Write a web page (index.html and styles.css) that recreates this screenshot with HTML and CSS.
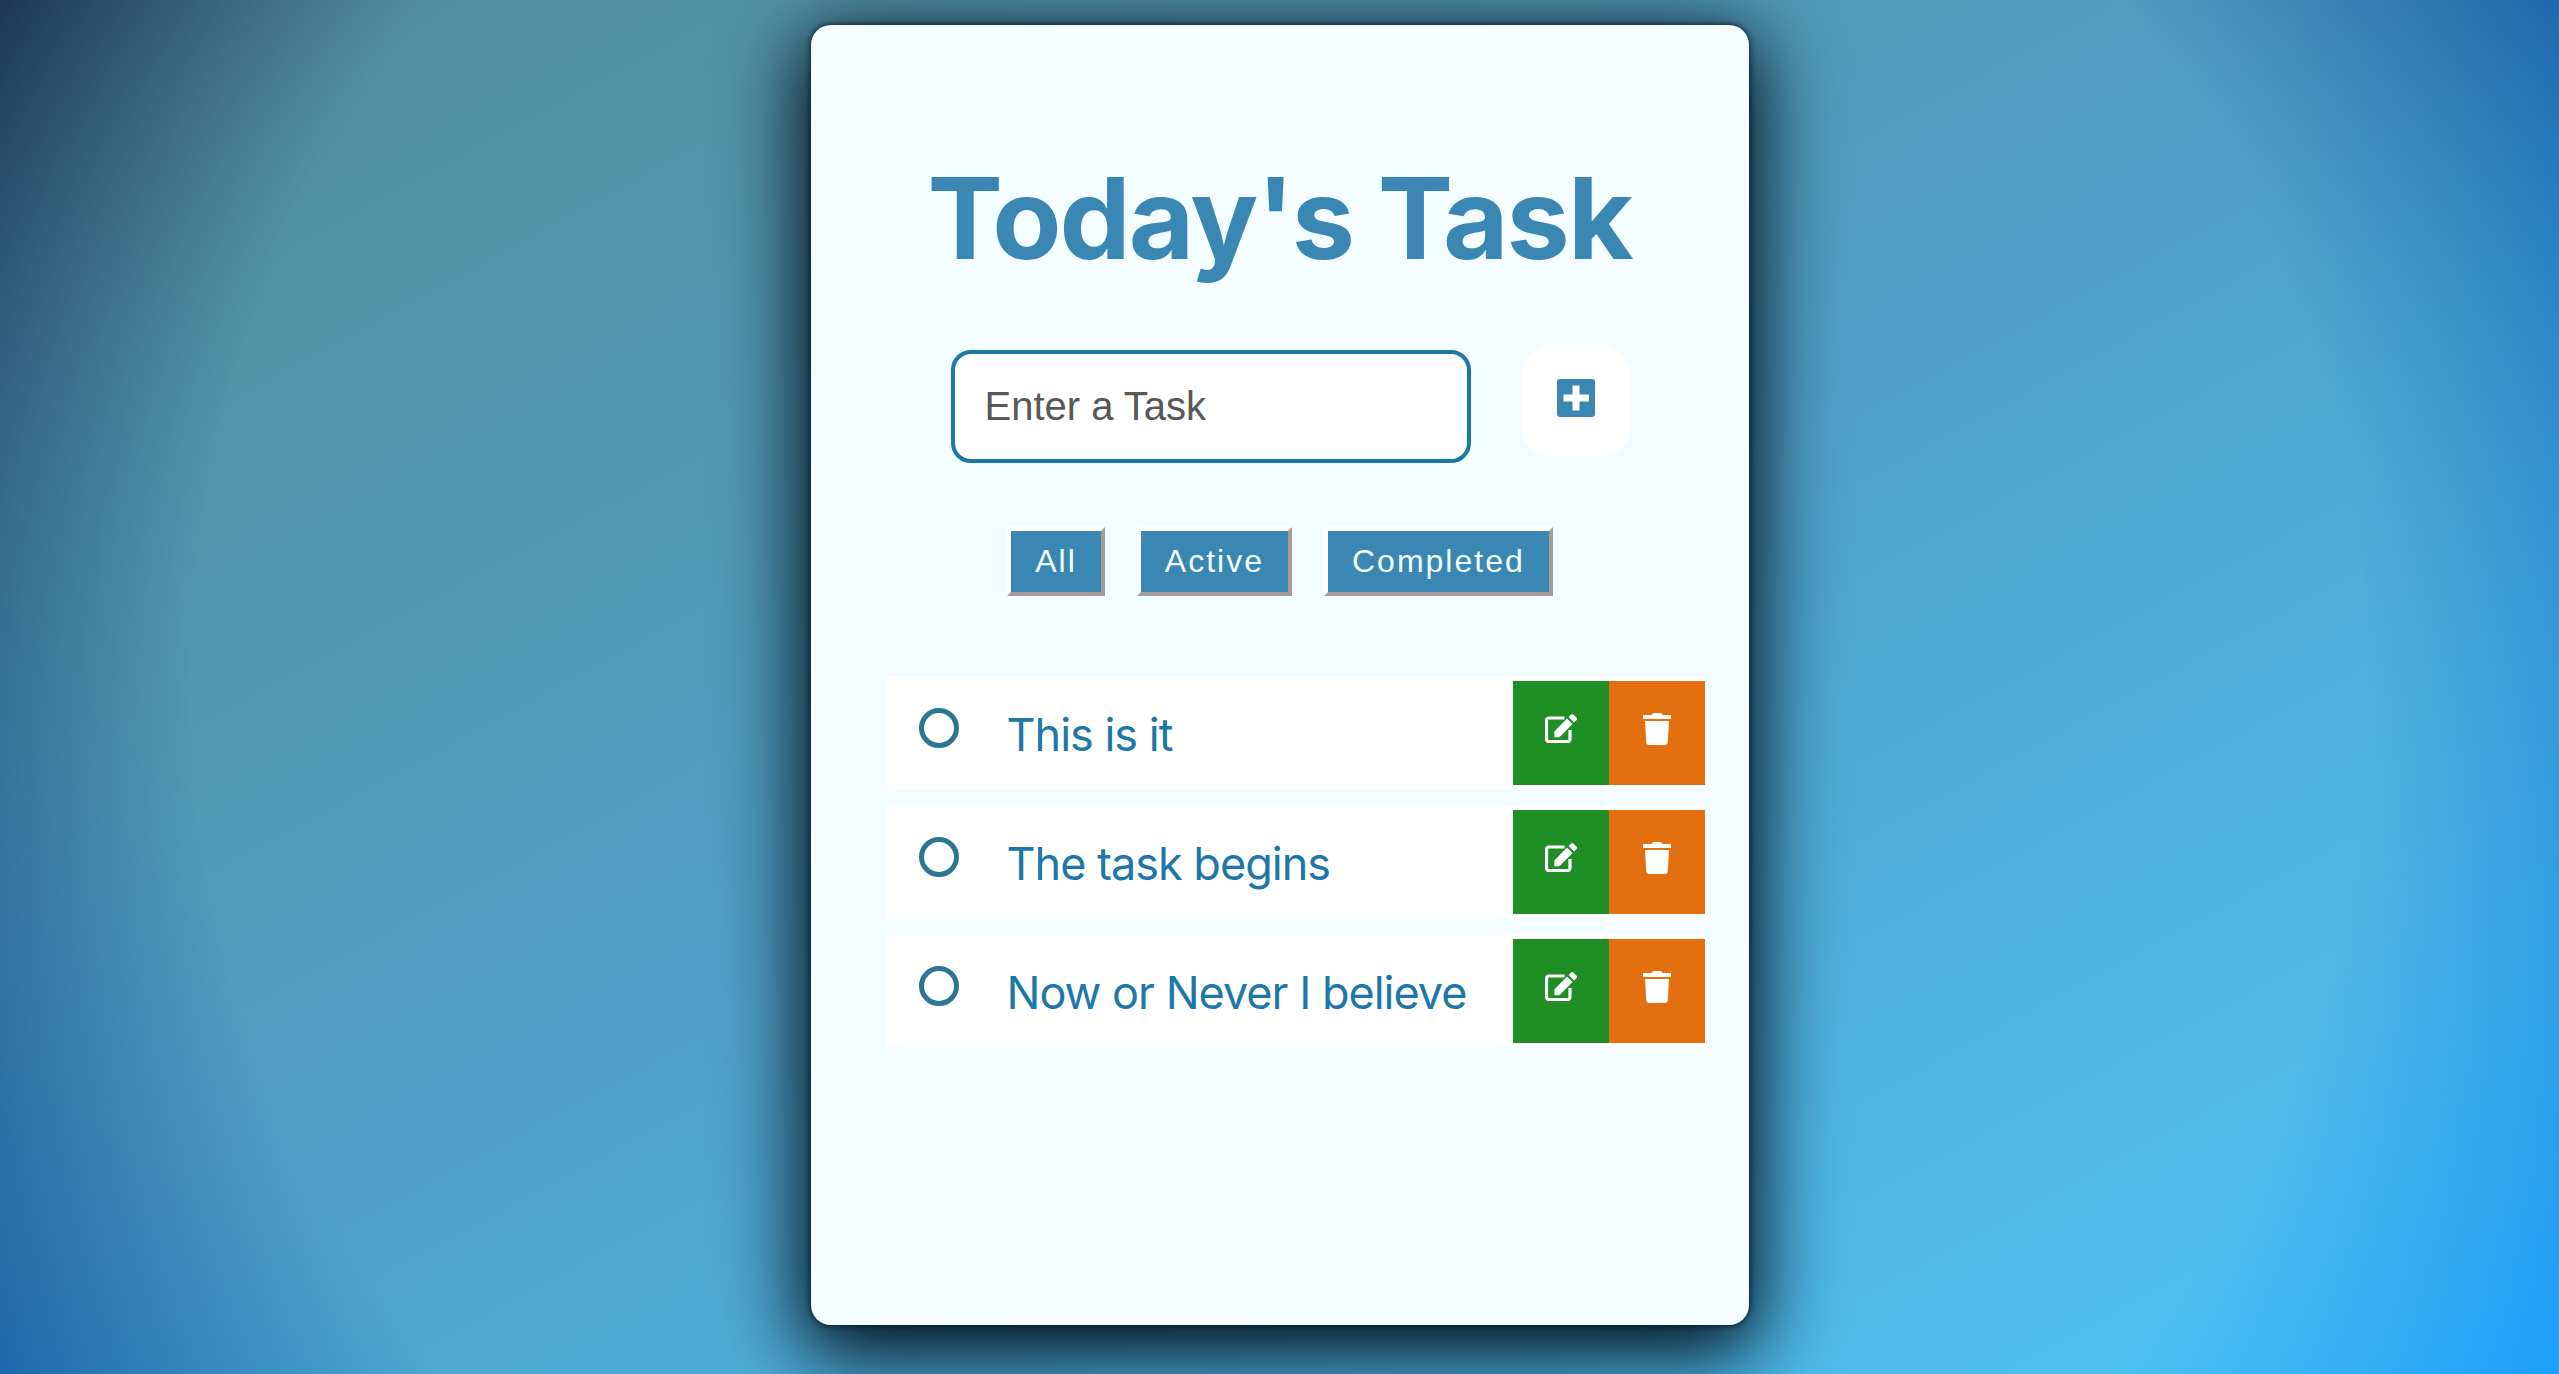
FILE: index.html
```html
<!DOCTYPE html>
<html lang="en">
<head>
<meta charset="utf-8">
<title>Today's Task</title>
<link rel="stylesheet" href="styles.css">
</head>
<body>
<svg class="sprite" aria-hidden="true">
  <symbol id="edit" viewBox="0 0 32 32">
    <path d="M19.500 5H4a2.500 2.500 0 0 0-2.500 2.500V26A2.500 2.500 0 0 0 4 28.500h18.500A2.500 2.500 0 0 0 25 26V17" fill="none" stroke="currentColor" stroke-width="3.200"/>
    <path d="M22 5.500 27.500 11 16 22.800 14 24.300H9.300V18.500ZM23.600 4l2.200-2.300a2 2 0 0 1 2.800 0l2.800 2.800a2 2 0 0 1 0 2.800L29 9.500Z" fill="currentColor"/>
  </symbol>
  <symbol id="trash" viewBox="0 0 28 32">
    <path d="M0 2h8.500a3 2 0 0 1 2.500-2h6a3 2 0 0 1 2.500 2H28v4H0ZM2 8h24l-1.200 21.200a3 3 0 0 1-3 2.800H6.200a3 3 0 0 1-3-2.800Z" fill="currentColor"/>
  </symbol>
</svg>
<main class="card">
  <h1 class="title">Today's Task</h1>
  <form class="entry">
    <input class="entry-input" type="text" placeholder="Enter a Task" aria-label="Enter a Task">
    <button class="entry-add" type="button" aria-label="Add task">
      <svg class="add-icon" viewBox="0 0 38 38"><path fill-rule="evenodd" d="M3 0h32a3 3 0 0 1 3 3v32a3 3 0 0 1-3 3H3a3 3 0 0 1-3-3V3a3 3 0 0 1 3-3ZM15.500 6.500v9h-9v7h9v9h7v-9h9.500v-7h-9.500v-9Z" fill="currentColor"/></svg>
    </button>
  </form>
  <div class="filters">
    <button class="filter" type="button">All</button>
    <button class="filter" type="button">Active</button>
    <button class="filter" type="button">Completed</button>
  </div>
  <ul class="tasks">
    <li class="task">
      <input class="task-check" type="checkbox" id="t1"><label class="task-label" for="t1">This is it</label>
      <button class="action edit" type="button" aria-label="Edit"><svg class="edit-icon"><use href="#edit"/></svg></button>
      <button class="action delete" type="button" aria-label="Delete"><svg class="trash-icon"><use href="#trash"/></svg></button>
    </li>
    <li class="task">
      <input class="task-check" type="checkbox" id="t2"><label class="task-label" for="t2">The task begins</label>
      <button class="action edit" type="button" aria-label="Edit"><svg class="edit-icon"><use href="#edit"/></svg></button>
      <button class="action delete" type="button" aria-label="Delete"><svg class="trash-icon"><use href="#trash"/></svg></button>
    </li>
    <li class="task">
      <input class="task-check" type="checkbox" id="t3"><label class="task-label" for="t3">Now or Never I believe</label>
      <button class="action edit" type="button" aria-label="Edit"><svg class="edit-icon"><use href="#edit"/></svg></button>
      <button class="action delete" type="button" aria-label="Delete"><svg class="trash-icon"><use href="#trash"/></svg></button>
    </li>
  </ul>
</main>
</body>
</html>
```
FILE: styles.css
```css
* { box-sizing: border-box; }

body {
  position: relative;
  isolation: isolate;
  margin: 0;
  min-height: 100vh;
  padding: 25px 24px 24px;
  font-family: Inter, "Liberation Sans", sans-serif;
  color: #1d77a8;
  background: linear-gradient(to bottom right, #548c96 0%, #4fa0c8 50%, #4ec6fa 100%);
}

/* Deeper blue vignette that fades in towards the corners */
body::before {
  content: "";
  position: absolute;
  inset: 0;
  z-index: -1;
  background: linear-gradient(to bottom right, #1e3755, #1e69ac 50%, #1c9ffa);
  mask-image: radial-gradient(circle farthest-corner at center, transparent 75%, #000 100%);
}

.sprite { display: none; }

.card {
  width: 100%;
  max-width: 938px;
  min-height: 1300px;
  margin: 0 auto;
  padding: 133px 44px 48px 76px;
  border-radius: 20px;
  background: #f3fdff;
  box-shadow: 0 20px 80px 10px #000a14, 0 0 6px #001828;
}

.title {
  margin: 0 32px 0 0;
  font-size: 113px;
  line-height: 120px;
  font-weight: 700;
  letter-spacing: -2px;
  text-align: center;
  white-space: nowrap;
  color: #3987b2;
}

.entry {
  display: flex;
  align-items: flex-start;
  gap: 50px;
  margin: 68px 0 0 64px;
}

.entry-input {
  width: 520px;
  height: 113px;
  margin-top: 4px;
  padding: 0 30px;
  border: 4px solid #1d77a8;
  border-radius: 20px;
  background: #fff;
  font-family: "Liberation Sans", Arial, sans-serif;
  font-size: 40px;
  color: #505050;
}

.entry-input::placeholder { color: #585858; opacity: 1; }

.entry-add {
  width: 110px;
  height: 110px;
  padding: 0 0 6px;
  border: 0;
  border-radius: 30px;
  background: #fff;
  color: #3987b2;
}

.add-icon { display: block; width: 38px; height: 38px; margin: 0 auto; }

.filters {
  display: flex;
  justify-content: center;
  gap: 32px;
  margin: 64px 31px 0 0;
}

.filter {
  height: 69px;
  padding: 0 24px;
  border: 4px solid;
  border-color: #fff #a59b98 #a59b98 #fff;
  background: #3987b2;
  color: #f3fdff;
  font-family: "Liberation Sans", Arial, sans-serif;
  font-size: 32px;
  letter-spacing: 2px;
}

.tasks {
  display: grid;
  gap: 16px;
  margin: 80px 0 0;
  padding: 0;
  list-style: none;
}

.task {
  display: flex;
  align-items: center;
  height: 113px;
  padding-left: 32px;
  background: #fff;
}

.task-check {
  appearance: none;
  width: 40px;
  height: 40px;
  margin: 0 48px 10px 0;
  border: 5px solid #2d7592;
  border-radius: 50%;
}

.task-label { flex: 1; padding-top: 4px; font-size: 45px; line-height: 56px; letter-spacing: -1px; white-space: nowrap; }

.action {
  width: 96px;
  height: 104px;
  padding: 0 0 8px;
  border: 0;
  color: #fff;
}

.edit { background: #1f8e24; }
.delete { background: #e36f0e; }
.edit-icon { display: block; width: 32px; height: 32px; margin: 0 auto; }
.trash-icon { display: block; width: 28px; height: 32px; margin: 0 auto; }
```
